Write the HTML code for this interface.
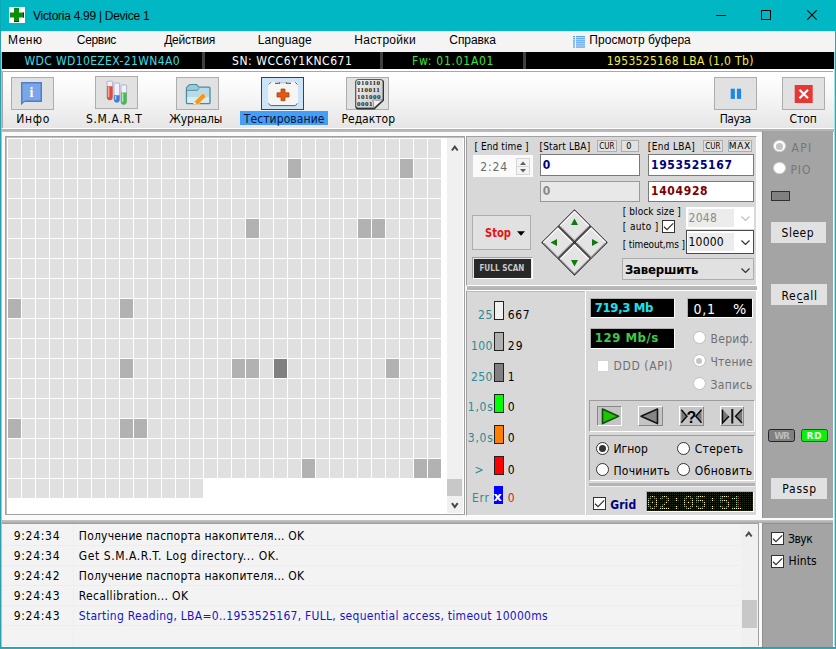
<!DOCTYPE html>
<html lang="ru"><head><meta charset="utf-8"><title>Victoria 4.99 | Device 1</title>
<style>
html,body{margin:0;padding:0;}
body{width:836px;height:649px;overflow:hidden;position:relative;background:#f0f0f0;font-family:'Liberation Sans',sans-serif;}
#w div,#w span.t,#w svg{position:absolute;box-sizing:border-box;}
#w span.t{white-space:pre;}

</style></head><body><div id="w" style="position:absolute;left:0;top:0;width:836px;height:649px;overflow:hidden">
<div style="left:0px;top:0px;width:836px;height:649px;background:#00b7c3;"></div>
<div style="left:1px;top:31px;width:834px;height:616px;background:#fafafa;"></div>
<div style="left:0px;top:31px;width:1px;height:618px;background:#2d9fae;"></div>
<div style="left:0px;top:0px;width:1px;height:31px;background:#0aa9b5;"></div>
<div style="left:1px;top:31px;width:1px;height:616px;background:#8ccfd8;"></div>
<div style="left:833px;top:69px;width:1px;height:578px;background:#fcfcfc;"></div>
<div style="left:834px;top:31px;width:1px;height:616px;background:#a8e0e6;"></div>
<div style="left:2px;top:646px;width:833px;height:1px;background:#f4fdfe;"></div>
<div style="left:0px;top:647px;width:836px;height:1px;background:#4d919c;"></div>
<div style="left:0px;top:648px;width:836px;height:1px;background:#2fa9b9;"></div>
<div style="left:9px;top:7px;width:16px;height:16px;background:#fff;"></div>
<div style="left:1px;top:31px;width:834px;height:21px;background:#f4f4f4;"></div>
<div style="left:2px;top:52px;width:832px;height:17px;background:#000;"></div>
<div style="left:202px;top:52px;width:3px;height:17px;background:#404040;"></div>
<div style="left:380px;top:52px;width:3px;height:17px;background:#404040;"></div>
<div style="left:523px;top:52px;width:3px;height:17px;background:#404040;"></div>
<div style="left:2px;top:69px;width:832px;height:59px;background:linear-gradient(#fefefe 10%,#f6f6f6 45%,#e6e6e6 100%);border-top:2px solid #fff;"></div>
<div style="left:2px;top:71px;width:831px;height:1px;background:#a8a8a8;"></div>
<div style="left:2px;top:71px;width:1px;height:57px;background:#a8a8a8;"></div>
<div style="left:2px;top:128px;width:832px;height:1px;background:#fff;"></div>
<div style="left:2px;top:129px;width:832px;height:3px;background:linear-gradient(#b0b0b0,#bebebe);"></div>
<div style="left:11px;top:77px;width:43px;height:33px;background:#e1e1e1;border:1px solid #adadad;"></div>
<div style="left:95px;top:76px;width:43px;height:33px;background:#e1e1e1;border:1px solid #adadad;"></div>
<div style="left:176px;top:77px;width:43px;height:33px;background:#e1e1e1;border:1px solid #adadad;"></div>
<div style="left:261px;top:77px;width:43px;height:33px;background:#cce4f7;border:1px solid #14488a;"></div>
<div style="left:239.8px;top:111px;width:88px;height:14px;background:#449ef6;"></div>
<div style="left:346px;top:77px;width:43px;height:33px;background:#e1e1e1;border:1px solid #adadad;"></div>
<div style="left:714px;top:77px;width:43px;height:33px;background:#e1e1e1;border:1px solid #adadad;"></div>
<div style="left:782px;top:77px;width:43px;height:33px;background:#e1e1e1;border:1px solid #adadad;"></div>
<div style="left:5px;top:136px;width:460px;height:379px;background:#fff;border:1px solid #a0a0a0;"></div>
<div style="left:6px;top:137px;width:458px;height:377px;border:1px solid #c0c0c0;border-right:0;border-bottom:0;"></div>
<div style="left:447px;top:138px;width:16px;height:375px;background:#f0f0f0;"></div>
<div style="left:447px;top:479px;width:15px;height:17px;background:#c8c8c8;"></div>
<div style="left:466px;top:136px;width:291px;height:150px;background:#d8d8d8;border:1px solid;border-color:#a0a0a0 #fff #fff #a0a0a0;"></div>
<div style="left:597px;top:140px;width:19.5px;height:11.5px;background:#e1e1e1;border:1px solid #adadad;"></div>
<div style="left:620.5px;top:140px;width:18.5px;height:11.5px;background:#e1e1e1;border:1px solid #adadad;"></div>
<div style="left:703px;top:140px;width:19.5px;height:11.5px;background:#e1e1e1;border:1px solid #adadad;"></div>
<div style="left:728px;top:140px;width:24px;height:11.5px;background:#e1e1e1;border:1px solid #adadad;"></div>
<div style="left:472.5px;top:155px;width:60px;height:22px;background:#fafafa;"></div>
<div style="left:515.5px;top:157.5px;width:14px;height:17px;background:#f4f4f4;border:1px solid #d6d6d6;"></div>
<div style="left:516.5px;top:166px;width:12px;height:1px;background:#d6d6d6;"></div>
<div style="left:540px;top:154px;width:100px;height:21.5px;background:#fff;border:1px solid #7a7a7a;"></div>
<div style="left:648px;top:154px;width:106px;height:21.5px;background:#fff;border:1px solid #7a7a7a;"></div>
<div style="left:540px;top:180.5px;width:100px;height:21px;background:#e8e8e8;border:1px solid #9a9a9a;"></div>
<div style="left:648px;top:180.5px;width:106px;height:21px;background:#fff;border:1px solid #7a7a7a;"></div>
<div style="left:472px;top:215px;width:59px;height:35px;background:#e1e1e1;border:1px solid #adadad;"></div>
<div style="left:472px;top:257px;width:61px;height:22px;background:#e8e8e8;border:1px solid;border-color:#a0a0a0 #fff #fff #a0a0a0;"></div>
<div style="left:474px;top:259px;width:57px;height:18.5px;background:#282828;"></div>
<div style="left:662px;top:220px;width:13px;height:13px;background:#fff;border:1px solid #333;"></div>
<div style="left:686px;top:207px;width:67.5px;height:22px;background:#fff;"></div>
<div style="left:688px;top:209px;width:46px;height:18px;background:#ececec;"></div>
<div style="left:685.5px;top:230px;width:68.5px;height:24px;background:#fff;border:1px solid #4a4a4a;"></div>
<div style="left:688px;top:233px;width:46px;height:18px;background:#ececec;"></div>
<div style="left:622px;top:258px;width:132px;height:22px;background:#e1e1e1;border:1px solid #adadad;"></div>
<div style="left:467px;top:286px;width:290px;height:4px;background:linear-gradient(#bcbcbc,#b0b0b0);"></div>
<div style="left:466px;top:290px;width:120px;height:226px;background:#d8d8d8;border:1px solid;border-color:#fff #fff #fff #a0a0a0;"></div>
<div style="left:467px;top:291px;width:118px;height:1px;background:#b8b8b8;"></div>
<div style="left:494px;top:301px;width:10px;height:19px;background:#f0f0f0;border:1px solid #222;"></div>
<div style="left:494px;top:332px;width:10px;height:19px;background:#b0b0b0;border:1px solid #222;"></div>
<div style="left:494px;top:363px;width:10px;height:19px;background:#808080;border:1px solid #222;"></div>
<div style="left:494px;top:394px;width:10px;height:19px;background:#00ff00;border:1px solid #222;"></div>
<div style="left:494px;top:425px;width:10px;height:19px;background:#ff8000;border:1px solid #222;"></div>
<div style="left:494px;top:456px;width:10px;height:19px;background:#ff0000;border:1px solid #222;"></div>
<div style="left:494px;top:486px;width:9px;height:18px;background:#0000ff;"></div>
<div style="left:586px;top:290px;width:171px;height:226px;background:#d8d8d8;border:1px solid;border-color:#fff #fff #fff #d8d8d8;"></div>
<div style="left:589.5px;top:297.5px;width:85.5px;height:20.5px;background:#000;border:1px solid;border-color:#b0b0b0 #fff #fff #b0b0b0;"></div>
<div style="left:589.5px;top:328px;width:85.5px;height:20.5px;background:#000;border:1px solid;border-color:#b0b0b0 #fff #fff #b0b0b0;"></div>
<div style="left:687px;top:297.5px;width:66px;height:20.5px;background:#000;border:1px solid;border-color:#b0b0b0 #fff #fff #b0b0b0;"></div>
<div style="left:597px;top:360px;width:12px;height:12px;background:#fff;border:1px solid #d4d4d4;"></div>
<div style="left:692.5px;top:331.0px;width:13px;height:13px;background:#fff;border:1px solid #c0c0c0;border-radius:50%;"></div>
<div style="left:692.5px;top:354.3px;width:13px;height:13px;background:#fff;border:1px solid #c0c0c0;border-radius:50%;"></div>
<div style="left:695.7px;top:357.5px;width:6.6px;height:6.6px;background:#c4c4c4;border-radius:50%;"></div>
<div style="left:692.5px;top:376.8px;width:13px;height:13px;background:#fff;border:1px solid #c0c0c0;border-radius:50%;"></div>
<div style="left:589px;top:400px;width:166px;height:32px;border:1px solid;border-color:#9c9c9c #fff #fff #9c9c9c;background:#d2d2d2;"></div>
<div style="left:597px;top:405.5px;width:25px;height:20.5px;background:#c4c4c4;border:1px solid;border-color:#888 #fff #fff #888;"></div>
<div style="left:638.3px;top:405.5px;width:24.5px;height:20.5px;background:#c4c4c4;border:1px solid;border-color:#fff #888 #888 #fff;"></div>
<div style="left:679px;top:405.5px;width:24.8px;height:20.5px;background:#c4c4c4;border:1px solid;border-color:#fff #888 #888 #fff;"></div>
<div style="left:719.5px;top:405.5px;width:24.5px;height:20.5px;background:#c4c4c4;border:1px solid;border-color:#fff #888 #888 #fff;"></div>
<div style="left:589px;top:435px;width:166px;height:46px;border:1px solid;border-color:#9c9c9c #fff #fff #9c9c9c;background:#d2d2d2;"></div>
<div style="left:595.5px;top:441.8px;width:13px;height:13px;background:#fff;border:1px solid #333;border-radius:50%;"></div>
<div style="left:598.5px;top:444.8px;width:7.0px;height:7.0px;background:#333;border-radius:50%;"></div>
<div style="left:595.5px;top:463.0px;width:13px;height:13px;background:#fff;border:1px solid #333;border-radius:50%;"></div>
<div style="left:676.8px;top:441.8px;width:13px;height:13px;background:#fff;border:1px solid #333;border-radius:50%;"></div>
<div style="left:676.8px;top:463.0px;width:13px;height:13px;background:#fff;border:1px solid #333;border-radius:50%;"></div>
<div style="left:589px;top:483px;width:166px;height:3px;background:#b4b4b4;"></div>
<div style="left:589px;top:486px;width:166px;height:1px;background:#f0f0f0;"></div>
<div style="left:593px;top:497px;width:13px;height:12.5px;background:#fff;border:1px solid #333;"></div>
<div style="left:646px;top:491px;width:107.5px;height:21px;background:#050505;border:1px solid;border-color:#b0b0b0 #fff #fff #b0b0b0;"></div>
<div style="left:647px;top:492px;width:105.5px;height:19px;background-color:#000;background-image:radial-gradient(circle at 0.5px 0.5px,#262c10 0.55px,transparent 0.8px);background-size:2px 2px;background-position:1px 0px;"></div>
<div style="left:647px;top:492px;width:105.5px;height:19px;background-image:linear-gradient(90deg,transparent 50%,rgba(0,0,0,.8) 50%),linear-gradient(transparent 50%,rgba(0,0,0,.8) 50%);background-size:2px 2px,2px 2px;background-position:1px 0px;z-index:5;"></div>
<div style="left:762px;top:131px;width:71px;height:387px;background:#a4a4a4;border-left:1px solid #909090;"></div>
<div style="left:773.3px;top:140.10000000000002px;width:12.4px;height:12.4px;background:#fff;border:1px solid #d0d0d0;border-radius:50%;"></div>
<div style="left:776.2px;top:143.0px;width:6.6px;height:6.6px;background:#c4c4c4;border-radius:50%;"></div>
<div style="left:773.3px;top:162.10000000000002px;width:12.4px;height:12.4px;background:#fff;border:1px solid #d0d0d0;border-radius:50%;"></div>
<div style="left:771.3px;top:191.3px;width:18.8px;height:9.3px;background:#808080;border:1px solid #303030;"></div>
<div style="left:771px;top:222px;width:55px;height:21px;background:#e1e1e1;"></div>
<div style="left:771px;top:284.3px;width:56px;height:21px;background:#e1e1e1;"></div>
<div style="left:797.5px;top:301.5px;width:5.5px;height:1px;background:#222;"></div>
<div style="left:771px;top:478px;width:56px;height:21px;background:#e1e1e1;"></div>
<div style="left:768px;top:429px;width:27px;height:13px;background:#808080;border:1px solid #242424;border-radius:2.500px;"></div>
<div style="left:801px;top:429px;width:27px;height:13px;background:#0cf00c;border:1px solid #1c5c1c;border-radius:2.500px;"></div>
<div style="left:2px;top:520px;width:831px;height:3px;background:linear-gradient(#c6c6c6,#aaaaaa);"></div>
<div style="left:2px;top:523px;width:757px;height:123px;background:#f3f3f3;border-top:1px solid #a0a0a0;border-right:1px solid #a0a0a0;"></div>
<div style="left:2px;top:544.5px;width:738px;height:1px;background:#ededed;"></div>
<div style="left:2px;top:564.5px;width:738px;height:1px;background:#ededed;"></div>
<div style="left:2px;top:584.5px;width:738px;height:1px;background:#ededed;"></div>
<div style="left:2px;top:604.5px;width:738px;height:1px;background:#ededed;"></div>
<div style="left:2px;top:624.5px;width:738px;height:1px;background:#ededed;"></div>
<div style="left:2px;top:644.5px;width:738px;height:1px;background:#ededed;"></div>
<div style="left:73px;top:524px;width:1px;height:123px;background:#eeeeee;"></div>
<div style="left:741px;top:524px;width:17px;height:123px;background:#f0f0f0;"></div>
<div style="left:742px;top:600px;width:15px;height:28px;background:#c8c8c8;"></div>
<div style="left:762px;top:522.5px;width:71px;height:124px;background:#a4a4a4;border-left:1px solid #909090;border-top:1px solid #909090;"></div>
<div style="left:771px;top:532px;width:13px;height:13px;background:#fff;border:1px solid #333;"></div>
<div style="left:771px;top:555px;width:13px;height:13px;background:#fff;border:1px solid #333;"></div>
<svg style="left:9px;top:7px" width="16" height="16" viewBox="0 0 16 16"><path d="M5 1h5v4.500h5v5h-5v4.500h-5v-4.500h-4v-5h4z" fill="#0b8c0b"/><path d="M14.500 5.500v5M5 14.500h5" stroke="#033803" stroke-width="1" fill="none"/></svg>
<svg style="left:716px;top:15px" width="10" height="1" viewBox="0 0 10 1"><rect width="10" height="1" fill="#000"/></svg>
<svg style="left:761px;top:10px" width="10" height="10" viewBox="0 0 10 10"><rect x="0.500" y="0.500" width="9" height="9" fill="none" stroke="#000"/></svg>
<svg style="left:807px;top:10px" width="10" height="10" viewBox="0 0 10 10"><path d="M0.300 0.300l9.400 9.400M9.700 0.300l-9.400 9.400" stroke="#000" stroke-width="1.100" fill="none"/></svg>
<svg style="left:573px;top:35px" width="12" height="14" viewBox="0 0 12 14"><rect x="0" y="1" width="2" height="1.300" fill="#55a2f0"/><rect x="3" y="1" width="9" height="1.300" fill="#55a2f0"/><rect x="0" y="3.1" width="2" height="1.300" fill="#55a2f0"/><rect x="3" y="3.1" width="9" height="1.300" fill="#55a2f0"/><rect x="0" y="5.2" width="2" height="1.300" fill="#55a2f0"/><rect x="3" y="5.2" width="9" height="1.300" fill="#55a2f0"/><rect x="0" y="7.2" width="2" height="1.300" fill="#55a2f0"/><rect x="3" y="7.2" width="9" height="1.300" fill="#55a2f0"/><rect x="0" y="9.3" width="2" height="1.300" fill="#55a2f0"/><rect x="3" y="9.3" width="9" height="1.300" fill="#55a2f0"/><rect x="0" y="11.4" width="2" height="1.300" fill="#55a2f0"/><rect x="3" y="11.4" width="9" height="1.300" fill="#55a2f0"/></svg>
<svg style="left:21px;top:82px" width="22" height="24" viewBox="0 0 22 24"><path d="M0 0h21v20h-17.500l-3.500 3.200z" fill="#4f7fc6"/><path d="M1.500 1.500h18v17h-15.500l-2.500 2z" fill="#7ba6ea"/><text x="10.5" y="14.500" font-family="'Liberation Serif',serif" font-weight="700" font-size="14" fill="#fff" text-anchor="middle">i</text></svg>
<svg style="left:104px;top:79px" width="26" height="28" viewBox="0 0 26 28"><path d="M3 2.8000000000000003q0-.6.600-.6h4.400q.6 0 .6.600v15.4a2.800 2.800 0 0 1-5.600 0z" fill="#eef0fa" stroke="#9aa0bc" stroke-width=".7"/><path d="M3 7.3h5.600v10.899999999999999a2.800 2.800 0 0 1-5.600 0z" fill="#e04a38"/><rect x="3.8" y="7.8" width="1.600" height="10.7" rx=".8" fill="#f6a89c"/><path d="M10 4.6q0-.6.600-.6h4.400q.6 0 .6.600v15.999999999999998a2.800 2.800 0 0 1-5.600 0z" fill="#eef0fa" stroke="#9aa0bc" stroke-width=".7"/><path d="M10 16.2h5.600v4.3999999999999995a2.800 2.800 0 0 1-5.600 0z" fill="#3a7fd2"/><rect x="10.8" y="16.7" width="1.600" height="4.199999999999999" rx=".8" fill="#a8ccf4"/><path d="M17 6.6q0-.6.600-.6h4.400q.6 0 .6.600v16.1a2.800 2.800 0 0 1-5.600 0z" fill="#eef0fa" stroke="#9aa0bc" stroke-width=".7"/><path d="M17 13.5h5.600v9.2a2.800 2.800 0 0 1-5.600 0z" fill="#48b850"/><rect x="17.8" y="14.0" width="1.600" height="9.0" rx=".8" fill="#b0e8b0"/></svg>
<svg style="left:185px;top:83px" width="26" height="24" viewBox="0 0 26 24"><path d="M1.500 4.700l3.200-3h6.800l2.300 2.500h10.200q1 0 1 1v14.500q0 1-1 1h-21.500q-1 0-1-1z" fill="#b9dbe5" stroke="#4a8ba2" stroke-width="1.300"/><path d="M2.200 4.700l2.700-2.400h6.400l2.300 2.500-1.300 2h-10.100z" fill="#9ccbd8"/><path d="M2 7.300h10.500l1.500-2" fill="none" stroke="#4a8ba2" stroke-width="1"/><path d="M2.200 14h21.800v5.800h-21.800z" fill="#d6edf2"/><path d="M8.300 21.800l1.200-3.300 7.500-7.800q.8-.8 1.600 0l1.900 1.900q.8.800 0 1.600l-7.600 7.600z" fill="#f7971c" stroke="#fbe0b8" stroke-width=".8"/><path d="M8.300 21.800l1.100-3.200 2.100 2.100z" fill="#eee"/><path d="M8.100 22l.8-1.300.6.600z" fill="#666"/></svg>
<svg style="left:267px;top:80px" width="32" height="28" viewBox="0 0 32 28"><rect x="1.200" y="2" width="29.800" height="23.600" rx="2.500" fill="#f5f5f4"/><path d="M1.700 4.500l2.300-2.300M30.500 4.500l-2.300-2.300M1.700 23.300q.5 2 2.500 2.300h23.600q2-.3 2.500-2.300" fill="none" stroke="#4a5058" stroke-width=".9"/><path d="M8 3.200h4.500v-1M24 3.200h-4.500v-1" fill="none" stroke="#3a4048" stroke-width="1.100"/><rect x="12.800" y="2" width="6.400" height="1.300" fill="#c4c4c4"/><path d="M14 9h4v3.800h4v4.200h-4v3.700h-4v-3.700h-4v-4.200h4z" fill="#ea560e" stroke="#9a3a10" stroke-width=".7"/></svg>
<svg style="left:354px;top:78px" width="32" height="33" viewBox="0 0 32 33"><defs><linearGradient id="pg" x1="0" y1="0" x2="1" y2="1"><stop offset="0" stop-color="#f2f2f2"/><stop offset="1" stop-color="#c4c4c4"/></linearGradient></defs><path d="M4.300 1.500h22.700q3 0 3 3v18l-9.500 9h-16.200q-3 0-3-3v-24q0-3 3-3z" fill="#2c2c2c"/><path d="M4.300 1.500h22q2.700 0 2.700 2.700v17.300l-9 8.500h-15.700q-2.500 0-2.500-2.500v-23.500q0-2.500 2.500-2.500z" fill="url(#pg)" stroke="#444" stroke-width=".8"/><path d="M19.300 30.300q1-5-.5-8.500 5 1.500 10.200-.3z" fill="#f4f4f4" stroke="#555" stroke-width=".5"/><text x="3" y="7.4" font-family="'Liberation Serif',serif" font-weight="700" font-size="7" letter-spacing=".5" fill="#1a1a1a">010110</text><text x="3" y="14.2" font-family="'Liberation Serif',serif" font-weight="700" font-size="7" letter-spacing=".5" fill="#1a1a1a">110011</text><text x="3" y="21" font-family="'Liberation Serif',serif" font-weight="700" font-size="7" letter-spacing=".5" fill="#1a1a1a">101000</text><text x="3" y="27.5" font-family="'Liberation Serif',serif" font-weight="700" font-size="7" letter-spacing=".5" fill="#1a1a1a">0001</text></svg>
<svg style="left:730px;top:88px" width="12" height="11" viewBox="0 0 12 11"><rect x="0.700" y="0.700" width="4.200" height="10.200" fill="#1e88e5"/><rect x="6.900" y="0.700" width="4.200" height="10.200" fill="#1e88e5"/></svg>
<svg style="left:794px;top:85px" width="19" height="18" viewBox="0 0 19 18"><rect x="0.700" y="0" width="18" height="18" fill="#e53935"/><path d="M5.500 4.800l8.500 8.500M14 4.800l-8.500 8.500" stroke="#fff" stroke-width="2.200"/></svg>
<svg style="left:8px;top:139px" width="434" height="360" viewBox="0 0 434 360"><defs><pattern id="gc" width="14" height="20" patternUnits="userSpaceOnUse"><rect width="13" height="19" fill="#e0e0e0"/></pattern></defs><rect width="434" height="340" fill="url(#gc)"/><rect y="340" width="196" height="20" fill="url(#gc)"/><rect x="280" y="20" width="13" height="19" fill="#b2b2b2"/><rect x="392" y="20" width="13" height="19" fill="#b2b2b2"/><rect x="238" y="80" width="13" height="19" fill="#b2b2b2"/><rect x="350" y="80" width="13" height="19" fill="#b2b2b2"/><rect x="364" y="80" width="13" height="19" fill="#b2b2b2"/><rect x="0" y="160" width="13" height="19" fill="#b2b2b2"/><rect x="112" y="160" width="13" height="19" fill="#b2b2b2"/><rect x="112" y="220" width="13" height="19" fill="#b2b2b2"/><rect x="224" y="220" width="13" height="19" fill="#b2b2b2"/><rect x="238" y="220" width="13" height="19" fill="#b2b2b2"/><rect x="266" y="220" width="13" height="19" fill="#808080"/><rect x="378" y="220" width="13" height="19" fill="#b2b2b2"/><rect x="0" y="280" width="13" height="19" fill="#b2b2b2"/><rect x="112" y="280" width="13" height="19" fill="#b2b2b2"/><rect x="126" y="280" width="13" height="19" fill="#b2b2b2"/><rect x="294" y="320" width="13" height="19" fill="#b2b2b2"/><rect x="406" y="320" width="13" height="19" fill="#b2b2b2"/><rect x="420" y="320" width="13" height="19" fill="#b2b2b2"/></svg>
<svg style="left:451px;top:144.5px" width="8" height="7" viewBox="0 0 8 7"><path d="M0.900 5.500l2.900-3.800 2.900 3.800" fill="none" stroke="#484848" stroke-width="2"/></svg>
<svg style="left:451px;top:501.5px" width="8" height="7" viewBox="0 0 8 7"><path d="M0.900 1.200l2.900 3.800 2.900-3.800" fill="none" stroke="#484848" stroke-width="2"/></svg>
<svg style="left:519.5px;top:160.5px" width="6" height="4" viewBox="0 0 6 4"><path d="M0 4l3-3.500 3 3.500z" fill="#606060"/></svg>
<svg style="left:519.5px;top:168.5px" width="6" height="4" viewBox="0 0 6 4"><path d="M0 0l3 3.500 3-3.500z" fill="#606060"/></svg>
<svg style="left:517px;top:231px" width="8" height="5" viewBox="0 0 8 5"><path d="M0 0.300h8l-4 4.500z" fill="#000"/></svg>
<svg style="left:541px;top:209px" width="67" height="67" viewBox="0 0 67 67"><g transform="translate(33.500 33.500) rotate(45)"><rect x="-23" y="-23" width="22.500" height="22.500" fill="#e4e4e4" stroke="#222" stroke-width="1"/><path d="M-22 -1.5v-20.500h20.500" fill="none" stroke="#fff" stroke-width="1.200"/><path d="M-21.5 -1.5h20v-20" fill="none" stroke="#a0a0a0" stroke-width="1"/><rect x="0.5" y="-23" width="22.500" height="22.500" fill="#e4e4e4" stroke="#222" stroke-width="1"/><path d="M1.5 -1.5v-20.500h20.500" fill="none" stroke="#fff" stroke-width="1.200"/><path d="M2.0 -1.5h20v-20" fill="none" stroke="#a0a0a0" stroke-width="1"/><rect x="-23" y="0.5" width="22.500" height="22.500" fill="#e4e4e4" stroke="#222" stroke-width="1"/><path d="M-22 22.0v-20.500h20.500" fill="none" stroke="#fff" stroke-width="1.200"/><path d="M-21.5 22.0h20v-20" fill="none" stroke="#a0a0a0" stroke-width="1"/><rect x="0.5" y="0.5" width="22.500" height="22.500" fill="#e4e4e4" stroke="#222" stroke-width="1"/><path d="M1.5 22.0v-20.500h20.500" fill="none" stroke="#fff" stroke-width="1.200"/><path d="M2.0 22.0h20v-20" fill="none" stroke="#a0a0a0" stroke-width="1"/></g><path d="M33.500 9.500l3.500 6.500h-7z" fill="#0c7c0c"/><path d="M33.500 57.500l3.500-6.500h-7z" fill="#0c7c0c"/><path d="M9.500 33.500l6.500-3.500v7z" fill="#0c7c0c"/><path d="M57.500 33.500l-6.500-3.500v7z" fill="#0c7c0c"/></svg>
<svg style="left:662px;top:220px" width="13" height="13" viewBox="0 0 13 13"><path d="M2 6.700l3 2.900 6.200-6.300" fill="none" stroke="#303030" stroke-width="1.200"/></svg>
<svg style="left:741px;top:216px" width="9" height="5" viewBox="0 0 9 5"><path d="M0.500 0.500l4 4 4-4" fill="none" stroke="#c0c0c0" stroke-width="1.200"/></svg>
<svg style="left:741px;top:240px" width="9" height="5" viewBox="0 0 9 5"><path d="M0.500 0.500l4 4 4-4" fill="none" stroke="#333" stroke-width="1.200"/></svg>
<svg style="left:741px;top:268px" width="9" height="5" viewBox="0 0 9 5"><path d="M0.500 0.500l4 4 4-4" fill="none" stroke="#333" stroke-width="1.200"/></svg>
<svg style="left:597px;top:405.5px" width="25" height="20.5" viewBox="0 0 25 20.500"><path d="M5.500 3l16 7.300-16 7.300z" fill="#22c400" stroke="#0c5014" stroke-width="1.700" stroke-linejoin="round"/></svg>
<svg style="left:638.3px;top:405.5px" width="24.5" height="20.5" viewBox="0 0 24.5 20.500"><path d="M19.500 3l-16.500 7.300 16.500 7.300z" fill="#868686" stroke="#161616" stroke-width="1.600" stroke-linejoin="round"/></svg>
<svg style="left:679px;top:405.5px" width="24.8" height="20.5" viewBox="0 0 24.8 20.500"><path d="M2.300 3.800l5.700 6.500-5.700 6.500z" fill="#787878"/><path d="M2.300 3.800l5.700 6.500-5.700 6.500" fill="none" stroke="#0a0a0a" stroke-width="1.400"/><path d="M22.500 3.800l-5.700 6.500 5.700 6.500z" fill="#787878"/><path d="M22.500 3.800l-5.700 6.500 5.700 6.500" fill="none" stroke="#0a0a0a" stroke-width="1.400"/><text x="12.400" y="16.600" font-family="'Liberation Sans',sans-serif" font-weight="700" font-size="16" fill="#000" text-anchor="middle">?</text></svg>
<svg style="left:719.5px;top:405.5px" width="24.5" height="20.5" viewBox="0 0 24.5 20.500"><path d="M2.500 3.500l6.500 6.800-6.500 6.800z" fill="#787878"/><path d="M2.500 3.500v13.600l6.500-6.800" fill="none" stroke="#0a0a0a" stroke-width="1.400"/><path d="M22 3.500l-6.500 6.800 6.500 6.800z" fill="#787878"/><path d="M22 3.500l-6.500 6.800 6.500 6.800" fill="none" stroke="#0a0a0a" stroke-width="1.400"/><rect x="11.300" y="3" width="2" height="14.500" fill="#111"/></svg>
<svg style="left:593px;top:496.7px" width="13" height="13" viewBox="0 0 13 13"><path d="M2 6.700l3 2.900 6.200-6.300" fill="none" stroke="#303030" stroke-width="1.200"/></svg>
<svg style="left:745px;top:531px" width="8" height="7" viewBox="0 0 8 7"><path d="M0.900 5.500l2.900-3.800 2.900 3.800" fill="none" stroke="#484848" stroke-width="2"/></svg>
<svg style="left:771px;top:532px" width="13" height="13" viewBox="0 0 13 13"><path d="M2 6.700l3 2.900 6.200-6.300" fill="none" stroke="#303030" stroke-width="1.200"/></svg>
<svg style="left:771px;top:555px" width="13" height="13" viewBox="0 0 13 13"><path d="M2 6.700l3 2.900 6.200-6.300" fill="none" stroke="#303030" stroke-width="1.200"/></svg>

<span class="t" style="left:33.00px;top:10.00px;font-family:'Liberation Sans',sans-serif;font-size:12px;line-height:12px;color:#000;letter-spacing:-0.278px;">Victoria 4.99 | Device 1</span>
<span class="t" style="left:8.00px;top:34.00px;font-family:'Liberation Sans',sans-serif;font-size:12px;line-height:12px;color:#000;letter-spacing:0.533px;">Меню</span>
<span class="t" style="left:76.80px;top:34.00px;font-family:'Liberation Sans',sans-serif;font-size:12px;line-height:12px;color:#000;letter-spacing:-0.320px;">Сервис</span>
<span class="t" style="left:164.20px;top:34.00px;font-family:'Liberation Sans',sans-serif;font-size:12px;line-height:12px;color:#000;letter-spacing:-0.214px;">Действия</span>
<span class="t" style="left:257.80px;top:34.00px;font-family:'Liberation Sans',sans-serif;font-size:12px;line-height:12px;color:#000;letter-spacing:0.071px;">Language</span>
<span class="t" style="left:354.30px;top:34.00px;font-family:'Liberation Sans',sans-serif;font-size:12px;line-height:12px;color:#000;letter-spacing:0.312px;">Настройки</span>
<span class="t" style="left:449.30px;top:34.00px;font-family:'Liberation Sans',sans-serif;font-size:12px;line-height:12px;color:#000;letter-spacing:-0.083px;">Справка</span>
<span class="t" style="left:589.30px;top:34.00px;font-family:'Liberation Sans',sans-serif;font-size:12px;line-height:12px;color:#000;letter-spacing:0.071px;">Просмотр буфера</span>
<span class="t" style="left:24.50px;top:55.00px;font-family:'DejaVu Sans Condensed','DejaVu Sans','Liberation Sans',sans-serif;font-size:12px;line-height:12px;color:#3cdce6;letter-spacing:0.368px;">WDC WD10EZEX-21WN4A0</span>
<span class="t" style="left:232.00px;top:55.00px;font-family:'DejaVu Sans Condensed','DejaVu Sans','Liberation Sans',sans-serif;font-size:12px;line-height:12px;color:#fff;letter-spacing:0.567px;">SN: WCC6Y1KNC671</span>
<span class="t" style="left:412.00px;top:55.00px;font-family:'DejaVu Sans Condensed','DejaVu Sans','Liberation Sans',sans-serif;font-size:12px;line-height:12px;color:#3ce43c;letter-spacing:0.727px;">Fw: 01.01A01</span>
<span class="t" style="left:606.70px;top:55.00px;font-family:'DejaVu Sans Condensed','DejaVu Sans','Liberation Sans',sans-serif;font-size:12px;line-height:12px;color:#f4ec44;letter-spacing:0.364px;">1953525168 LBA (1,0 Tb)</span>
<span class="t" style="left:16.30px;top:113.00px;font-family:'DejaVu Sans Condensed','DejaVu Sans','Liberation Sans',sans-serif;font-size:12px;line-height:12px;color:#000;letter-spacing:0.667px;">Инфо</span>
<span class="t" style="left:86.00px;top:113.00px;font-family:'DejaVu Sans Condensed','DejaVu Sans','Liberation Sans',sans-serif;font-size:12px;line-height:12px;color:#000;letter-spacing:0.625px;">S.M.A.R.T</span>
<span class="t" style="left:169.30px;top:113.00px;font-family:'DejaVu Sans Condensed','DejaVu Sans','Liberation Sans',sans-serif;font-size:12px;line-height:12px;color:#000;letter-spacing:-0.167px;">Журналы</span>
<span class="t" style="left:243.80px;top:113.00px;font-family:'DejaVu Sans Condensed','DejaVu Sans','Liberation Sans',sans-serif;font-size:12px;line-height:12px;color:#0a1238;letter-spacing:0.091px;">Тестирование</span>
<span class="t" style="left:341.50px;top:113.00px;font-family:'DejaVu Sans Condensed','DejaVu Sans','Liberation Sans',sans-serif;font-size:12px;line-height:12px;color:#000;letter-spacing:0.000px;">Редактор</span>
<span class="t" style="left:719.70px;top:113.00px;font-family:'DejaVu Sans Condensed','DejaVu Sans','Liberation Sans',sans-serif;font-size:12px;line-height:12px;color:#000;letter-spacing:-0.500px;">Пауза</span>
<span class="t" style="left:789.40px;top:113.00px;font-family:'DejaVu Sans Condensed','DejaVu Sans','Liberation Sans',sans-serif;font-size:12px;line-height:12px;color:#000;letter-spacing:0.000px;">Стоп</span>
<span class="t" style="left:474.50px;top:142.00px;font-family:'DejaVu Sans Condensed','DejaVu Sans','Liberation Sans',sans-serif;font-size:10px;line-height:10px;color:#000;letter-spacing:0.091px;">[ End time ]</span>
<span class="t" style="left:539.50px;top:142.00px;font-family:'DejaVu Sans Condensed','DejaVu Sans','Liberation Sans',sans-serif;font-size:10px;line-height:10px;color:#000;letter-spacing:0.150px;">[Start LBA]</span>
<span class="t" style="left:647.80px;top:142.00px;font-family:'DejaVu Sans Condensed','DejaVu Sans','Liberation Sans',sans-serif;font-size:10px;line-height:10px;color:#000;letter-spacing:0.338px;">[End LBA]</span>
<span class="t" style="left:599.25px;top:143.00px;font-family:'DejaVu Sans Condensed','DejaVu Sans','Liberation Sans',sans-serif;font-size:8px;line-height:8px;color:#000;letter-spacing:0.000px;">CUR</span>
<span class="t" style="left:626.25px;top:142.00px;font-family:'DejaVu Sans Condensed','DejaVu Sans','Liberation Sans',sans-serif;font-size:9px;line-height:9px;color:#000;">0</span>
<span class="t" style="left:705.25px;top:143.00px;font-family:'DejaVu Sans Condensed','DejaVu Sans','Liberation Sans',sans-serif;font-size:8px;line-height:8px;color:#000;letter-spacing:0.000px;">CUR</span>
<span class="t" style="left:728.85px;top:142.00px;font-family:'DejaVu Sans','Liberation Sans',sans-serif;font-size:9px;line-height:9px;color:#000;letter-spacing:0.650px;">MAX</span>
<span class="t" style="left:480.30px;top:161.30px;font-family:'DejaVu Sans Condensed','DejaVu Sans','Liberation Sans',sans-serif;font-size:12px;line-height:12px;color:#6a6a6a;letter-spacing:0.833px;">2:24</span>
<span class="t" style="left:542.80px;top:158.80px;font-family:'DejaVu Sans Condensed','DejaVu Sans','Liberation Sans',sans-serif;font-size:12px;line-height:12px;color:#000080;font-weight:700;">0</span>
<span class="t" style="left:651.00px;top:158.80px;font-family:'DejaVu Sans Condensed','DejaVu Sans','Liberation Sans',sans-serif;font-size:12px;line-height:12px;color:#000080;font-weight:700;letter-spacing:0.644px;">1953525167</span>
<span class="t" style="left:542.80px;top:184.50px;font-family:'DejaVu Sans Condensed','DejaVu Sans','Liberation Sans',sans-serif;font-size:12px;line-height:12px;color:#888;font-weight:700;">0</span>
<span class="t" style="left:651.00px;top:184.50px;font-family:'DejaVu Sans Condensed','DejaVu Sans','Liberation Sans',sans-serif;font-size:12px;line-height:12px;color:#800000;font-weight:700;letter-spacing:0.667px;">1404928</span>
<span class="t" style="left:485.14px;top:226.00px;font-family:'DejaVu Sans Condensed','DejaVu Sans','Liberation Sans',sans-serif;font-size:13px;line-height:13px;color:#e81010;font-weight:700;transform:scaleX(0.8552);transform-origin:0 0;">Stop</span>
<span class="t" style="left:479.40px;top:265.00px;font-family:'DejaVu Sans Condensed','DejaVu Sans','Liberation Sans',sans-serif;font-size:8px;line-height:8px;color:#c8c8c8;font-weight:700;letter-spacing:0.062px;">FULL SCAN</span>
<span class="t" style="left:622.80px;top:207.00px;font-family:'DejaVu Sans Condensed','DejaVu Sans','Liberation Sans',sans-serif;font-size:10px;line-height:10px;color:#000;letter-spacing:0.077px;">[ block size ]</span>
<span class="t" style="left:622.80px;top:222.00px;font-family:'DejaVu Sans Condensed','DejaVu Sans','Liberation Sans',sans-serif;font-size:10px;line-height:10px;color:#000;letter-spacing:0.357px;">[ auto ]</span>
<span class="t" style="left:622.80px;top:240.00px;font-family:'DejaVu Sans Condensed','DejaVu Sans','Liberation Sans',sans-serif;font-size:10px;line-height:10px;color:#000;letter-spacing:-0.154px;">[ timeout,ms ]</span>
<span class="t" style="left:688.50px;top:211.80px;font-family:'DejaVu Sans Condensed','DejaVu Sans','Liberation Sans',sans-serif;font-size:12px;line-height:12px;color:#8a8a8a;letter-spacing:0.267px;">2048</span>
<span class="t" style="left:688.50px;top:235.80px;font-family:'DejaVu Sans Condensed','DejaVu Sans','Liberation Sans',sans-serif;font-size:12px;line-height:12px;color:#000;letter-spacing:0.200px;">10000</span>
<span class="t" style="left:624.90px;top:263.00px;font-family:'DejaVu Sans Condensed','DejaVu Sans','Liberation Sans',sans-serif;font-size:13px;line-height:13px;color:#000;font-weight:700;letter-spacing:-0.150px;">Завершить</span>
<span class="t" style="left:478.00px;top:309.00px;font-family:'DejaVu Sans Condensed','DejaVu Sans','Liberation Sans',sans-serif;font-size:12px;line-height:12px;color:#2a8c94;letter-spacing:0.600px;">25</span>
<span class="t" style="left:507.80px;top:309.00px;font-family:'DejaVu Sans Condensed','DejaVu Sans','Liberation Sans',sans-serif;font-size:12px;line-height:12px;color:#000;letter-spacing:0.650px;">667</span>
<span class="t" style="left:471.00px;top:340.00px;font-family:'DejaVu Sans Condensed','DejaVu Sans','Liberation Sans',sans-serif;font-size:12px;line-height:12px;color:#2a8c94;letter-spacing:0.400px;">100</span>
<span class="t" style="left:507.80px;top:340.00px;font-family:'DejaVu Sans Condensed','DejaVu Sans','Liberation Sans',sans-serif;font-size:12px;line-height:12px;color:#000;letter-spacing:1.000px;">29</span>
<span class="t" style="left:471.00px;top:371.00px;font-family:'DejaVu Sans Condensed','DejaVu Sans','Liberation Sans',sans-serif;font-size:12px;line-height:12px;color:#2a8c94;letter-spacing:0.400px;">250</span>
<span class="t" style="left:507.80px;top:371.00px;font-family:'DejaVu Sans Condensed','DejaVu Sans','Liberation Sans',sans-serif;font-size:12px;line-height:12px;color:#000;">1</span>
<span class="t" style="left:467.80px;top:401.00px;font-family:'DejaVu Sans Condensed','DejaVu Sans','Liberation Sans',sans-serif;font-size:12px;line-height:12px;color:#2a8c94;letter-spacing:0.733px;">1,0s</span>
<span class="t" style="left:507.80px;top:401.00px;font-family:'DejaVu Sans Condensed','DejaVu Sans','Liberation Sans',sans-serif;font-size:12px;line-height:12px;color:#000;">0</span>
<span class="t" style="left:467.80px;top:432.00px;font-family:'DejaVu Sans Condensed','DejaVu Sans','Liberation Sans',sans-serif;font-size:12px;line-height:12px;color:#2a8c94;letter-spacing:0.733px;">3,0s</span>
<span class="t" style="left:507.80px;top:432.00px;font-family:'DejaVu Sans Condensed','DejaVu Sans','Liberation Sans',sans-serif;font-size:12px;line-height:12px;color:#000;">0</span>
<span class="t" style="left:474.50px;top:464.00px;font-family:'DejaVu Sans Condensed','DejaVu Sans','Liberation Sans',sans-serif;font-size:12px;line-height:12px;color:#2a8c94;">&gt;</span>
<span class="t" style="left:507.80px;top:464.00px;font-family:'DejaVu Sans Condensed','DejaVu Sans','Liberation Sans',sans-serif;font-size:12px;line-height:12px;color:#000;">0</span>
<span class="t" style="left:472.00px;top:492.00px;font-family:'DejaVu Sans Condensed','DejaVu Sans','Liberation Sans',sans-serif;font-size:12px;line-height:12px;color:#2a8c94;letter-spacing:0.750px;">Err</span>
<span class="t" style="left:493.60px;top:490.00px;font-family:'DejaVu Sans','Liberation Sans',sans-serif;font-size:13px;line-height:13px;color:#fff;font-weight:700;">x</span>
<span class="t" style="left:507.80px;top:492.00px;font-family:'DejaVu Sans Condensed','DejaVu Sans','Liberation Sans',sans-serif;font-size:12px;line-height:12px;color:#e02020;">0</span>
<span class="t" style="left:594.80px;top:301.00px;font-family:'DejaVu Sans Condensed','DejaVu Sans','Liberation Sans',sans-serif;font-size:13px;line-height:13px;color:#20e0f0;font-weight:700;letter-spacing:-0.357px;">719,3 Mb</span>
<span class="t" style="left:594.80px;top:331.00px;font-family:'DejaVu Sans Condensed','DejaVu Sans','Liberation Sans',sans-serif;font-size:13px;line-height:13px;color:#40c848;font-weight:700;letter-spacing:0.529px;">129 Mb/s</span>
<span class="t" style="left:693.40px;top:302.00px;font-family:'DejaVu Sans Condensed','DejaVu Sans','Liberation Sans',sans-serif;font-size:14px;line-height:14px;color:#fff;letter-spacing:0.750px;">0,1</span>
<span class="t" style="left:733.00px;top:302.00px;font-family:'DejaVu Sans','Liberation Sans',sans-serif;font-size:14px;line-height:14px;color:#fff;">%</span>
<span class="t" style="left:613.50px;top:360.00px;font-family:'DejaVu Sans Condensed','DejaVu Sans','Liberation Sans',sans-serif;font-size:12px;line-height:12px;color:#707070;letter-spacing:0.625px;">DDD (API)</span>
<span class="t" style="left:710.50px;top:332.50px;font-family:'DejaVu Sans Condensed','DejaVu Sans','Liberation Sans',sans-serif;font-size:12px;line-height:12px;color:#707070;letter-spacing:0.300px;">Вериф.</span>
<span class="t" style="left:710.50px;top:355.80px;font-family:'DejaVu Sans Condensed','DejaVu Sans','Liberation Sans',sans-serif;font-size:12px;line-height:12px;color:#707070;letter-spacing:0.200px;">Чтение</span>
<span class="t" style="left:710.50px;top:378.80px;font-family:'DejaVu Sans Condensed','DejaVu Sans','Liberation Sans',sans-serif;font-size:12px;line-height:12px;color:#707070;letter-spacing:0.400px;">Запись</span>
<span class="t" style="left:613.50px;top:443.30px;font-family:'DejaVu Sans Condensed','DejaVu Sans','Liberation Sans',sans-serif;font-size:12px;line-height:12px;color:#000;letter-spacing:0.000px;">Игнор</span>
<span class="t" style="left:613.50px;top:465.00px;font-family:'DejaVu Sans Condensed','DejaVu Sans','Liberation Sans',sans-serif;font-size:12px;line-height:12px;color:#000;letter-spacing:0.214px;">Починить</span>
<span class="t" style="left:694.80px;top:443.30px;font-family:'DejaVu Sans Condensed','DejaVu Sans','Liberation Sans',sans-serif;font-size:12px;line-height:12px;color:#000;letter-spacing:0.283px;">Стереть</span>
<span class="t" style="left:694.80px;top:465.00px;font-family:'DejaVu Sans Condensed','DejaVu Sans','Liberation Sans',sans-serif;font-size:12px;line-height:12px;color:#000;letter-spacing:0.357px;">Обновить</span>
<span class="t" style="left:610.30px;top:498.80px;font-family:'DejaVu Sans Condensed','DejaVu Sans','Liberation Sans',sans-serif;font-size:12px;line-height:12px;color:#000080;font-weight:700;letter-spacing:0.067px;">Grid</span>
<span class="t" style="left:646.50px;top:494.00px;font-family:'Liberation Mono',monospace;font-size:20px;line-height:20px;color:#f4f0b0;">02:05:51</span>
<span class="t" style="left:791.50px;top:142.00px;font-family:'DejaVu Sans Condensed','DejaVu Sans','Liberation Sans',sans-serif;font-size:12px;line-height:12px;color:#767676;letter-spacing:1.350px;">API</span>
<span class="t" style="left:790.50px;top:164.00px;font-family:'DejaVu Sans Condensed','DejaVu Sans','Liberation Sans',sans-serif;font-size:12px;line-height:12px;color:#767676;letter-spacing:0.850px;">PIO</span>
<span class="t" style="left:781.60px;top:227.00px;font-family:'DejaVu Sans Condensed','DejaVu Sans','Liberation Sans',sans-serif;font-size:12px;line-height:12px;color:#000;letter-spacing:0.500px;">Sleep</span>
<span class="t" style="left:781.50px;top:290.00px;font-family:'DejaVu Sans Condensed','DejaVu Sans','Liberation Sans',sans-serif;font-size:12px;line-height:12px;color:#000;letter-spacing:0.660px;">Recall</span>
<span class="t" style="left:782.30px;top:483.00px;font-family:'DejaVu Sans Condensed','DejaVu Sans','Liberation Sans',sans-serif;font-size:12px;line-height:12px;color:#000;letter-spacing:0.750px;">Passp</span>
<span class="t" style="left:774.20px;top:432.00px;font-family:'DejaVu Sans','Liberation Sans',sans-serif;font-size:9px;line-height:9px;color:#bcbcbc;font-weight:700;letter-spacing:-1.000px;">WR</span>
<span class="t" style="left:806.40px;top:432.00px;font-family:'DejaVu Sans','Liberation Sans',sans-serif;font-size:9px;line-height:9px;color:#f4fff4;font-weight:700;letter-spacing:0.600px;">RD</span>
<span class="t" style="left:13.70px;top:529.50px;font-family:'DejaVu Sans Condensed','DejaVu Sans','Liberation Sans',sans-serif;font-size:12px;line-height:12px;color:#000;letter-spacing:0.700px;">9:24:34</span>
<span class="t" style="left:78.80px;top:529.50px;font-family:'DejaVu Sans Condensed','DejaVu Sans','Liberation Sans',sans-serif;font-size:12px;line-height:12px;color:#000;letter-spacing:0.212px;">Получение паспорта накопителя... OK</span>
<span class="t" style="left:13.70px;top:549.50px;font-family:'DejaVu Sans Condensed','DejaVu Sans','Liberation Sans',sans-serif;font-size:12px;line-height:12px;color:#000;letter-spacing:0.700px;">9:24:34</span>
<span class="t" style="left:78.80px;top:549.50px;font-family:'DejaVu Sans Condensed','DejaVu Sans','Liberation Sans',sans-serif;font-size:12px;line-height:12px;color:#000;letter-spacing:0.565px;">Get S.M.A.R.T. Log directory... OK.</span>
<span class="t" style="left:13.70px;top:569.50px;font-family:'DejaVu Sans Condensed','DejaVu Sans','Liberation Sans',sans-serif;font-size:12px;line-height:12px;color:#000;letter-spacing:0.700px;">9:24:42</span>
<span class="t" style="left:78.80px;top:569.50px;font-family:'DejaVu Sans Condensed','DejaVu Sans','Liberation Sans',sans-serif;font-size:12px;line-height:12px;color:#000;letter-spacing:0.212px;">Получение паспорта накопителя... OK</span>
<span class="t" style="left:13.70px;top:589.50px;font-family:'DejaVu Sans Condensed','DejaVu Sans','Liberation Sans',sans-serif;font-size:12px;line-height:12px;color:#000;letter-spacing:0.700px;">9:24:43</span>
<span class="t" style="left:78.80px;top:589.50px;font-family:'DejaVu Sans Condensed','DejaVu Sans','Liberation Sans',sans-serif;font-size:12px;line-height:12px;color:#000;letter-spacing:0.326px;">Recallibration... OK</span>
<span class="t" style="left:13.70px;top:609.50px;font-family:'DejaVu Sans Condensed','DejaVu Sans','Liberation Sans',sans-serif;font-size:12px;line-height:12px;color:#000;letter-spacing:0.700px;">9:24:43</span>
<span class="t" style="left:78.80px;top:609.50px;font-family:'DejaVu Sans Condensed','DejaVu Sans','Liberation Sans',sans-serif;font-size:12px;line-height:12px;color:#1616c4;letter-spacing:0.272px;">Starting Reading, LBA=0..1953525167, FULL, sequential access, timeout 10000ms</span>
<span class="t" style="left:788.00px;top:533.00px;font-family:'DejaVu Sans Condensed','DejaVu Sans','Liberation Sans',sans-serif;font-size:12px;line-height:12px;color:#000;letter-spacing:-0.467px;">Звук</span>
<span class="t" style="left:788.50px;top:555.00px;font-family:'DejaVu Sans Condensed','DejaVu Sans','Liberation Sans',sans-serif;font-size:12px;line-height:12px;color:#000;letter-spacing:0.100px;">Hints</span>
</div></body></html>
